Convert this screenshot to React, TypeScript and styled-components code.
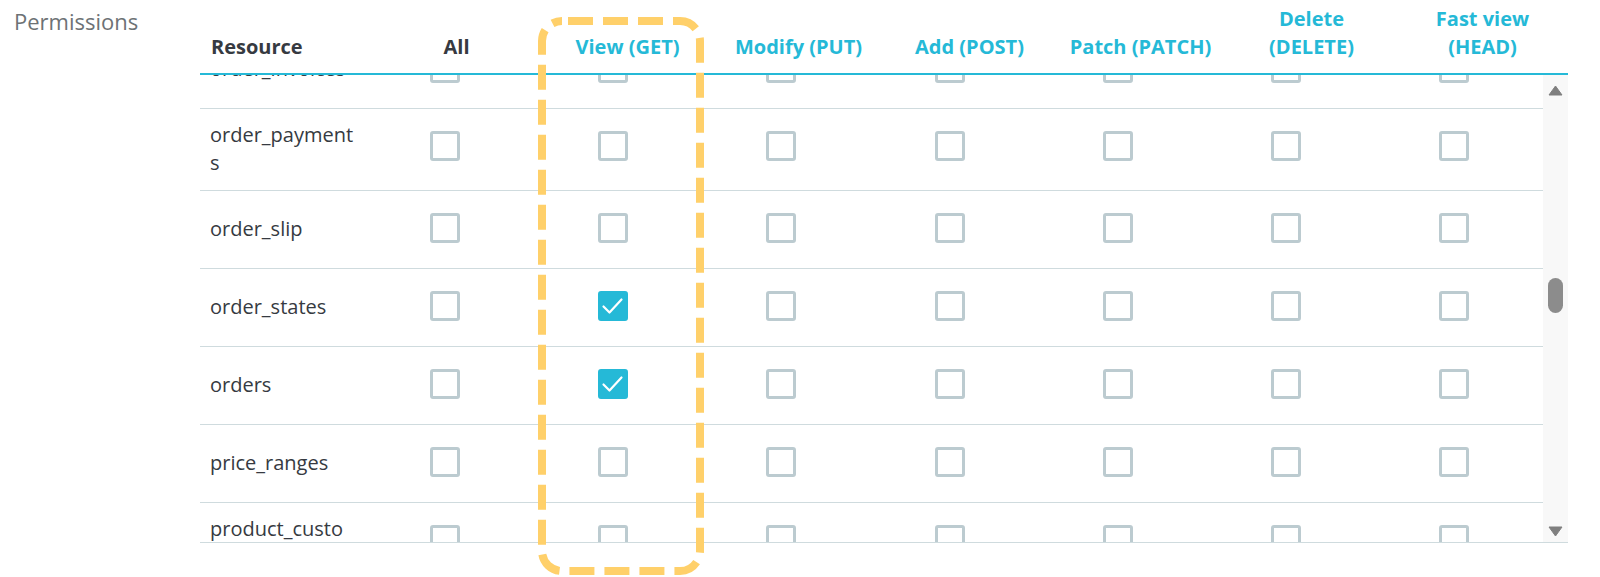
import React, { useLayoutEffect, useRef } from "react";
import styled, { createGlobalStyle } from "styled-components";

const GlobalStyle = createGlobalStyle`
  html, body {
    margin: 0;
    padding: 0;
    background: #ffffff;
  }
  body {
    font-family: "Open Sans", "Noto Sans", "Liberation Sans", sans-serif;
    color: #363a41;
  }
`;

const Page = styled.div`
  position: relative;
  width: 1600px;
  height: 577px;
  overflow: hidden;
  display: flex;
  align-items: flex-start;
`;

const FieldLabel = styled.div`
  width: 200px;
  box-sizing: border-box;
  padding: 6px 0 0 14px;
  font-size: 22px;
  line-height: 30px;
  color: #6d7275;
`;

const TableBox = styled.div`
  width: 1368px;
  display: flex;
  flex-direction: column;
`;

const HeadRow = styled.div`
  display: grid;
  grid-template-columns: repeat(8, 1fr);
  align-items: end;
  padding-top: 5px;
  border-bottom: 2px solid #25b9d7;
`;

const HeadCell = styled.div<{ $accent?: boolean; $left?: boolean }>`
  box-sizing: border-box;
  padding: 0 10px 12px ${(p) => (p.$left ? "11px" : "10px")};
  font-size: 20px;
  line-height: 28px;
  font-weight: 700;
  text-align: ${(p) => (p.$left ? "left" : "center")};
  color: ${(p) => (p.$accent ? "#25b9d7" : "#363a41")};
`;

const BodyWrap = styled.div`
  display: flex;
  height: 467px;
  border-bottom: 1px solid #cfdbde;
`;

const Viewport = styled.div`
  position: relative;
  flex: 1;
  overflow: hidden;
`;

const Row = styled.div`
  display: grid;
  grid-template-columns: 161px repeat(7, 168.2px);
  border-bottom: 1px solid #cfdbde;
`;

const ResourceCell = styled.div`
  align-self: center;
  box-sizing: border-box;
  padding: 12px 4px 13px 10px;
  font-size: 20px;
  line-height: 28px;
  color: #363a41;
  word-break: break-all;
`;

const BoxCell = styled.div`
  display: flex;
  justify-content: center;
  padding: 22px 0 25px;
`;

const Box = styled.span<{ $checked?: boolean }>`
  box-sizing: border-box;
  width: 30px;
  height: 30px;
  border-radius: 3px;
  border: 3px solid ${(p) => (p.$checked ? "#25b9d7" : "#bccbd0")};
  background: ${(p) => (p.$checked ? "#25b9d7" : "#ffffff")};
  display: flex;
  align-items: center;
  justify-content: center;
`;

const ScrollTrack = styled.div`
  width: 25px;
  background: #f8f8f8;
  display: flex;
  flex-direction: column;
  align-items: center;
`;

const ScrollButton = styled.div<{ $h: number }>`
  height: ${(p) => p.$h}px;
  width: 100%;
  display: flex;
  align-items: center;
  justify-content: center;
`;

const ThumbArea = styled.div`
  flex: 1;
  display: flex;
  justify-content: center;
`;

const Thumb = styled.div<{ $top: number }>`
  margin-top: ${(p) => p.$top}px;
  width: 15px;
  height: 35px;
  border-radius: 8px;
  background: #8c8c8c;
`;

const Highlight = styled.svg`
  position: absolute;
  left: 538px;
  top: 17px;
  pointer-events: none;
`;

const headers = [
  "Resource",
  "All",
  "View (GET)",
  "Modify (PUT)",
  "Add (POST)",
  "Patch (PATCH)",
  "Delete (DELETE)",
  "Fast view (HEAD)",
];

type Resource = { name: string; checked?: number[] };

const resources: Resource[] = [
  { name: "order_carriers" },
  { name: "order_cart_rules" },
  { name: "order_details" },
  { name: "order_histories" },
  { name: "order_invoices" },
  { name: "order_payments" },
  { name: "order_slip" },
  { name: "order_states", checked: [1] },
  { name: "orders", checked: [1] },
  { name: "price_ranges" },
  { name: "product_customization_fields" },
  { name: "product_feature_values" },
  { name: "product_features" },
];

const Check = () => (
  <svg width="24" height="24" viewBox="0 0 24 24">
    <polyline
      points="2.5,12.5 8.5,18.5 20.5,5.5"
      fill="none"
      stroke="#ffffff"
      strokeWidth="2.2"
      strokeLinecap="round"
      strokeLinejoin="round"
    />
  </svg>
);

const Arrow = ({ up }: { up?: boolean }) => (
  <svg width="15" height="11" viewBox="0 0 15 11">
    <polygon
      points={up ? "7.5,1 14,10 1,10" : "1,1 14,1 7.5,10"}
      fill="#7f7f7f"
      stroke="#7f7f7f"
      strokeWidth="1"
      strokeLinejoin="round"
    />
  </svg>
);

export default function App() {
  const viewportRef = useRef<HTMLDivElement>(null);
  const anchorRef = useRef<HTMLDivElement>(null);

  useLayoutEffect(() => {
    const vp = viewportRef.current;
    const anchor = anchorRef.current;
    if (vp && anchor) {
      vp.scrollTop = anchor.offsetTop - 34;
    }
  }, []);

  return (
    <>
      <GlobalStyle />
      <Page>
        <FieldLabel>Permissions</FieldLabel>
        <TableBox>
          <HeadRow>
            {headers.map((h, i) => (
              <HeadCell key={h} $left={i === 0} $accent={i > 1}>
                {h}
              </HeadCell>
            ))}
          </HeadRow>
          <BodyWrap>
            <Viewport ref={viewportRef}>
              {resources.map((r) => (
                <Row
                  key={r.name}
                  ref={r.name === "order_payments" ? anchorRef : undefined}
                >
                  <ResourceCell>{r.name}</ResourceCell>
                  {Array.from({ length: 7 }).map((_, c) => {
                    const on = r.checked?.includes(c) ?? false;
                    return (
                      <BoxCell key={c}>
                        <Box $checked={on}>{on && <Check />}</Box>
                      </BoxCell>
                    );
                  })}
                </Row>
              ))}
            </Viewport>
            <ScrollTrack>
              <ScrollButton $h={30}>
                <Arrow up />
              </ScrollButton>
              <ThumbArea>
                <Thumb $top={173} />
              </ThumbArea>
              <ScrollButton $h={22}>
                <Arrow />
              </ScrollButton>
            </ScrollTrack>
          </BodyWrap>
        </TableBox>
        <Highlight width="166" height="558" viewBox="0 0 166 558">
          <rect
            x="4"
            y="4"
            width="158"
            height="550"
            rx="20"
            ry="20"
            fill="none"
            stroke="#ffd06a"
            strokeWidth="8"
            strokeDasharray="25 10"
            strokeDashoffset="-6"
          />
        </Highlight>
      </Page>
    </>
  );
}
